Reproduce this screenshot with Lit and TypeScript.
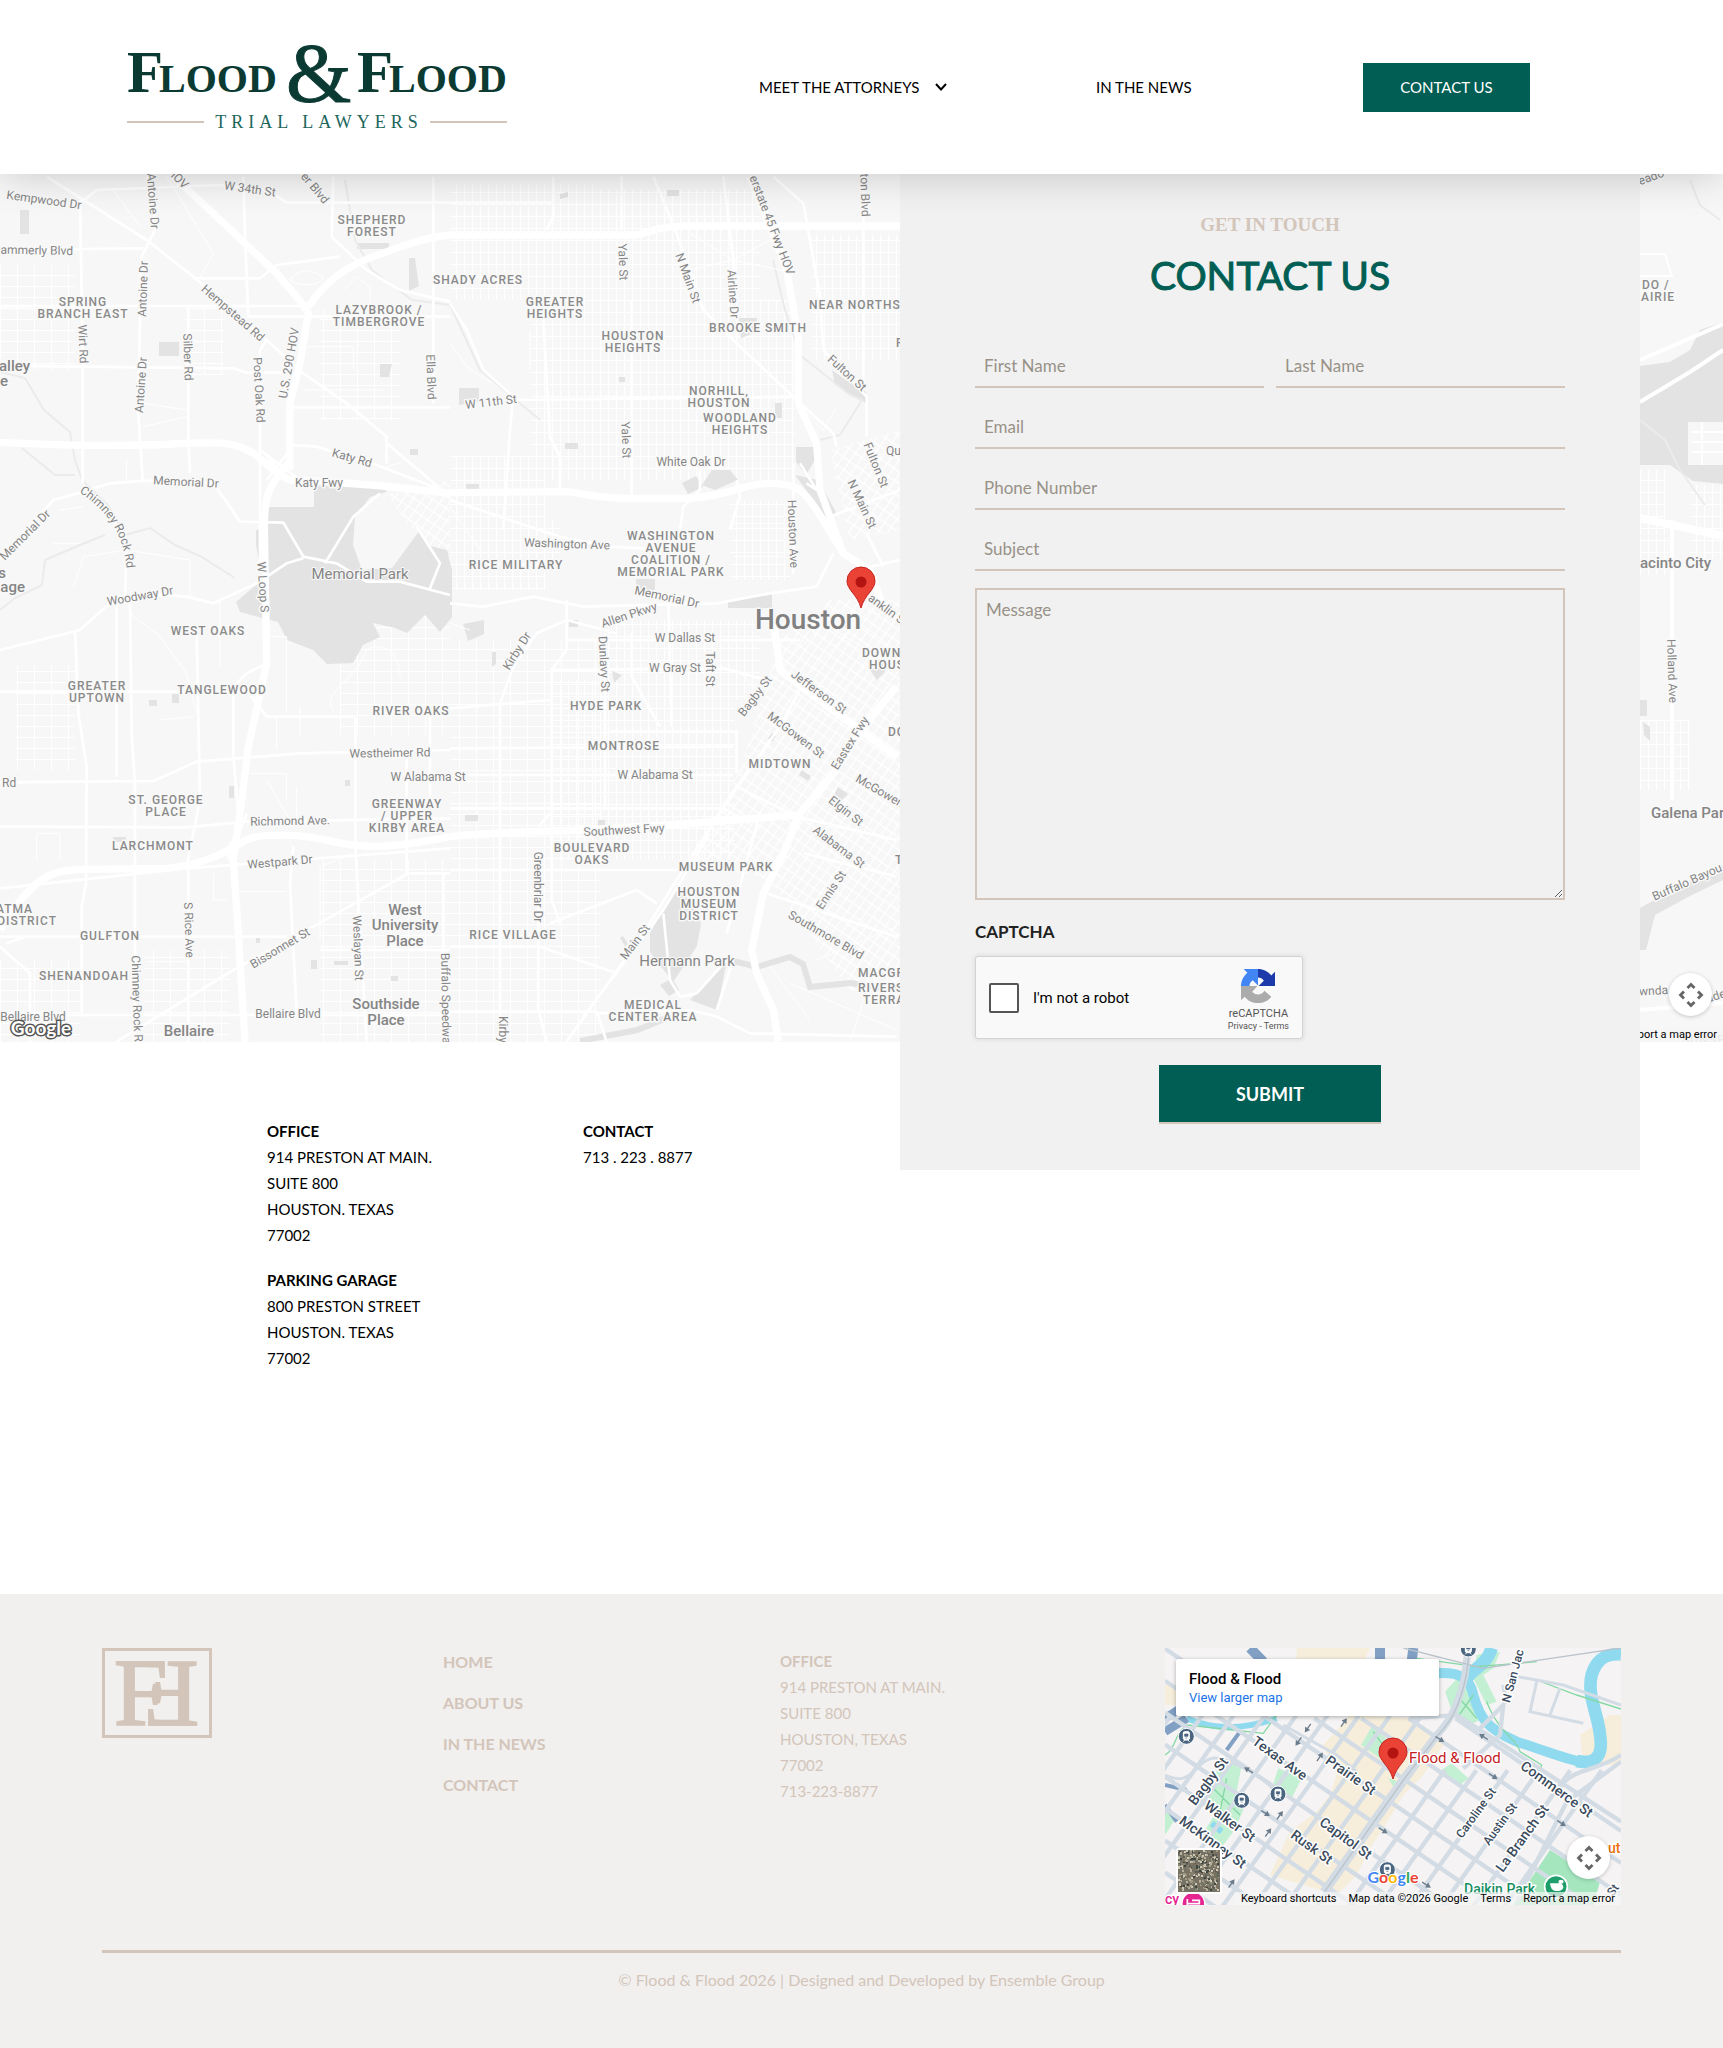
import { LitElement, html, svg, css, nothing } from "lit";
import { customElement } from "lit/decorators.js";

type Anchor = "start" | "middle" | "end";
type Label = [text: string, x: number, y: number, angle?: number, anchor?: Anchor];

const STREETS: Label[] = [
  ["Kempwood Dr", 44, 200, 8], ["Antoine Dr", 153, 201, 86], ["HOV", 178, 178, 45],
  ["W 34th St", 250, 189, 8], ["er Blvd", 315, 188, 50], ["Hammerly Blvd", 73, 251, 1, "end"],
  ["Antoine Dr", 143, 289, -88], ["Wirt Rd", 83, 344, 88], ["Silber Rd", 188, 357, 88],
  ["Antoine Dr", 141, 385, -86], ["Hempstead Rd", 233, 313, 41], ["U.S. 290 HOV", 289, 363, -80],
  ["Post Oak Rd", 259, 390, 87], ["Ella Blvd", 431, 377, 88], ["Katy Rd", 352, 458, 16],
  ["Katy Fwy", 319, 483], ["Memorial Dr", 186, 482, 3], ["Memorial Dr", 25, 535, -45],
  ["W Loop S", 263, 587, 86], ["Woodway Dr", 140, 596, -10], ["Yale St", 623, 262, 88],
  ["N Main St", 688, 278, 70], ["Airline Dr", 733, 294, 86], ["erstate 45 Fwy HOV", 772, 225, 69],
  ["ton Blvd", 865, 195, 88], ["W 11th St", 491, 402, -7], ["Yale St", 626, 440, 88],
  ["White Oak Dr", 691, 462], ["Fulton St", 847, 373, 42], ["Fulton St", 876, 465, 68],
  ["N Main St", 862, 504, 65], ["Qu", 886, 451, 0, "start"], ["Houston Ave", 793, 534, 88],
  ["Washington Ave", 567, 544, 2], ["Memorial Dr", 667, 597, 12], ["anklin St", 888, 610, 36],
  ["Westheimer Rd", 390, 753, -1], ["W Alabama St", 428, 777], ["Richmond Ave.", 290, 821, -1],
  ["Westpark Dr", 280, 862, -5], ["S Rice Ave", 189, 930, 88], ["Chimney Rock Rd", 137, 1002, 88],
  ["Bissonnet St", 280, 948, -31], ["Weslayan St", 358, 948, 88], ["Bellaire Blvd", 288, 1014],
  ["Bellaire Blvd", 33, 1017], ["Buffalo Speedway", 445, 953, 89, "start"], ["Rd", 2, 783, 0, "start"],
  ["Allen Pkwy", 629, 615, -18], ["Kirby Dr", 517, 651, -58], ["Dunlavy St", 604, 664, 87],
  ["W Dallas St", 685, 638], ["W Gray St", 675, 668], ["Taft St", 710, 669, 90],
  ["Bagby St", 755, 696, -53], ["Jefferson St", 819, 692, 36], ["McGowen St", 796, 735, 37],
  ["Eastex Fwy", 850, 743, -58], ["McGowen", 880, 791, 30], ["W Alabama St", 655, 775],
  ["Elgin St", 846, 811, 38], ["Alabama St", 839, 847, 37], ["Ennis St", 831, 890, -56],
  ["Southmore Blvd", 826, 935, 30], ["Southwest Fwy", 624, 830, -3], ["Greenbriar Dr", 538, 887, 90],
  ["Main St", 635, 942, -53], ["Kirby Dr", 503, 1016, 90, "start"], ["eado", 1651, 177, -20],
  ["Holland Ave", 1672, 671, 88], ["Buffalo Bayou", 1687, 882, -24], ["awnda", 1668, 990, -3, "end"],
  ["ade", 1716, 996, -18],
];

const AREAS: Label[] = [
  ["SHEPHERD", 372, 220], ["FOREST", 372, 232], ["SPRING", 83, 302], ["BRANCH EAST", 83, 314],
  ["LAZYBROOK /", 379, 310], ["TIMBERGROVE", 379, 322], ["SHADY ACRES", 478, 280],
  ["GREATER", 555, 302], ["HEIGHTS", 555, 314], ["HOUSTON", 633, 336], ["HEIGHTS", 633, 348],
  ["BROOKE SMITH", 758, 328], ["NEAR NORTHS", 809, 305, 0, "start"], ["P", 896, 343, 0, "start"],
  ["NORHILL,", 719, 391], ["HOUSTON", 719, 403], ["WOODLAND", 740, 418], ["HEIGHTS", 740, 430],
  ["WASHINGTON", 671, 536], ["AVENUE", 671, 548], ["COALITION /", 671, 560], ["MEMORIAL PARK", 671, 572],
  ["RICE MILITARY", 516, 565], ["WEST OAKS", 208, 631], ["GREATER", 97, 686], ["UPTOWN", 97, 698],
  ["TANGLEWOOD", 222, 690], ["RIVER OAKS", 411, 711], ["ST. GEORGE", 166, 800], ["PLACE", 166, 812],
  ["GREENWAY", 407, 804], ["/ UPPER", 407, 816], ["KIRBY AREA", 407, 828], ["LARCHMONT", 153, 846],
  ["MAHATMA", 33, 909, 0, "end"], ["DISTRICT", 57, 921, 0, "end"], ["GULFTON", 110, 936],
  ["SHENANDOAH", 84, 976], ["HYDE PARK", 606, 706], ["DOWN", 862, 653, 0, "start"],
  ["HOUS", 869, 665, 0, "start"], ["DO", 888, 732, 0, "start"], ["MONTROSE", 624, 746],
  ["MIDTOWN", 780, 764], ["BOULEVARD", 592, 848], ["OAKS", 592, 860], ["MUSEUM PARK", 726, 867],
  ["HOUSTON", 709, 892], ["MUSEUM", 709, 904], ["DISTRICT", 709, 916], ["RICE VILLAGE", 513, 935],
  ["MEDICAL", 653, 1005], ["CENTER AREA", 653, 1017], ["MACGR", 858, 973, 0, "start"],
  ["RIVERS", 858, 988, 0, "start"], ["TERRA", 863, 1000, 0, "start"], ["T", 895, 860, 0, "start"],
  ["DO /", 1642, 285, 0, "start"], ["AIRIE", 1641, 297, 0, "start"],
];

const TOWNS: Label[] = [
  ["Valley", 30, 366, 0, "end"], ["e", 8, 381, 0, "end"], ["s", 6, 573, 0, "end"], ["Village", 25, 587, 0, "end"],
  ["West", 405, 910], ["University", 405, 925], ["Place", 405, 941],
  ["Southside", 386, 1004], ["Place", 386, 1020], ["Bellaire", 189, 1031],
  ["acinto City", 1640, 563, 0, "start"], ["Galena Park", 1651, 813, 0, "start"],
];

const PARKS: Label[] = [["Memorial Park", 360, 574], ["Hermann Park", 687, 961]];

/* Road sheets: each is drawn on a 3x grid that starts at the given origin. */
const SHEETS = [
  {
    x: 0, y: 170,
    wide: "M0 817C150 825 350 830 520 822S700 818 760 850C800 880 840 920 870 930C1000 935 1150 945 1350 970M520 20L640 130L830 310C880 370 910 400 925 430L900 580L870 700V900M925 410C980 330 1040 290 1120 260S1280 200 1350 195M865 880C800 950 795 990 793 1060L797 1320",
    mid: "M0 408H900M240 90L248 560V940M440 20L470 170L425 260L420 450L415 730L428 930M565 410V800L570 910M0 587L700 595L740 608H860M0 240L430 235M140 20L440 210L580 320L800 510L910 610L1040 700L1160 800V880M1160 820L1350 980M580 325H780L830 285L1020 260M730 20L735 200L745 440H1350M1000 20L995 200L1100 300L1200 360L1350 395M870 825L950 830L1130 885L1350 970M0 1170L160 990L250 965L330 940L430 932L640 940L690 1010L720 1055L850 1058L910 1160L1010 1180L1100 1235H1200L1350 1275M800 510L780 540V1180M860 712H1350M1300 20V700M245 965L340 1050L380 1120L375 1300M240 100L290 60L660 45L800 60L860 98H1350M320 1300L420 1270L560 1280L640 1300L770 1240L860 1180L910 1165M975 1180L1060 1040L1140 970M1250 1070L1320 1180L1290 1255M795 850L860 930M800 930L870 840M780 840L900 930",
    fine: "M380 870V930M1160 890L1200 880M180 1020L250 1010M160 1120H240M220 1250L250 1160L380 1140L570 1170V1280M430 700L560 720M430 770L560 740M870 330C900 290 950 300 970 325C950 350 900 350 870 330M1030 360L1070 320L1110 350V400M500 20L640 250L600 325M340 60L420 170M910 660H1150M920 530H1060L1060 600",
  },
  {
    x: 450, y: 170,
    wide: "M0 195H560C620 180 620 170 720 168H1350M0 968L350 965C430 975 450 985 550 985H720C850 975 880 940 960 940S1060 960 1100 1020L1180 1150L1260 1200L1300 1310M900 20L960 170L1010 300L1045 500V700L1100 820L1110 960L1180 1150",
    mid: "M310 20V140L290 180M515 20V180M545 390V980M280 450L300 800L330 860V960M0 400L50 480L100 600L190 680L180 780L160 1080M200 690L1040 680M610 20L680 190L760 420L860 520L1040 690L1150 790L1160 830M820 20L850 270L860 400M970 20L1060 100L1110 380L1120 540L1250 680V800M1240 20V660M0 98H310M1030 880V1210M690 1080L700 1010L750 960V900M0 1300L100 1310L250 1280L400 1310L800 1300L960 1270L1100 1250L1150 1150M1260 1190L1350 1170M860 930L870 980L840 1080M0 990L330 1100L480 1130L660 1140M1050 880L1100 960L1070 940M1140 1040L1350 960M1250 1090L1300 1190",
    fine: "M720 190L850 270L960 210M720 300L850 270L1040 310M240 480V600M0 520L60 600L130 640M1040 700L1120 780L1160 710M0 1010L90 1140M850 1060H1000M850 1160H1000",
  },
  {
    x: 0, y: 600,
    wide: "M797 0L800 190L745 440L720 640L700 780L715 1000L735 1325M0 990C100 830 150 810 250 808L500 805C640 790 700 740 740 720S900 700 1000 725S1200 740 1350 710",
    mid: "M0 150L240 90L340 0M225 90L235 340L260 500L258 850L245 920V1250M350 0V530M390 0L395 400L405 550V1325M0 275H800M800 190L740 220L700 260V470L715 640M0 547L460 543L590 485L900 460L1350 450M0 680L560 682L740 665L1350 655M0 865L560 805L1350 745M740 270L800 350H1060M1066 350V740L1075 900L1100 1325M565 800V1325M0 1010H860M350 1325L700 1110L940 980L1225 820H1350M0 1245H1350M1220 450V820M1290 350V600M880 740L870 850L890 1240M590 100L600 600L560 800M960 1050H1350M0 1040L90 1120V1325M1330 820V1325M20 1030L80 1010M690 780C660 740 730 700 740 640",
    fine: "M660 0V200M390 40L480 110L560 220L590 340M800 110H860V340M830 350V450M900 320V410M480 360L580 350M1000 330C960 280 1070 240 1100 150C1150 120 1200 160 1200 230M110 780V700H180V780M750 520H860V600M800 540L880 680M890 660V560M640 820V900H680M960 1020V800L1060 760M440 1085H560M720 875H860",
  },
  {
    x: 450, y: 600,
    wide: "M0 710C60 700 150 700 400 690L700 672L1040 645M1340 260L1240 380L1150 520L1050 640L1000 760L940 880L905 1050L920 1120L970 1230L985 1325M970 60L990 210L1160 340L1340 470",
    mid: "M150 1325V310L190 200L260 100L350 60L500 100M350 0V150L305 210V900L330 970M465 100V620M0 325L300 300M300 210L820 205L950 240M350 120H1050M0 445L850 440M0 625H820L900 670M545 100V230L630 380M655 0L665 380M480 395H860V520M50 525H850M0 810H680M350 1325L580 1000L680 840L860 560L990 380L1060 250M0 1040H270L500 1120M0 1235H440L470 1325M440 1240L720 1230L800 1250L900 1300L1340 1310M860 560L1040 650L1340 720M265 750V1230L290 1325M640 940L660 1140L690 1190L740 1180L830 1080M400 1250L640 930L780 700M300 970L560 870L620 910M850 1080L800 1230M930 640L830 1000M1060 760L1340 830M950 880L1340 1010M300 640L265 680",
    fine: "M0 70L60 90M860 210L960 300M1000 190L1200 0M1080 220L1290 0M1340 150L1200 50M1150 300L1340 100M1340 200L1100 60M960 1100L1080 1260M1100 1080L1340 980M1020 1150L1340 1290M1240 1200L1200 1325",
  },
];

const drawLabels = (labels: Label[], cls: string) =>
  labels.map(([text, x, y, angle = 0, anchor = "middle"]) => svg`
    <text class=${cls} x=${x} y=${y} text-anchor=${anchor} dominant-baseline="central"
      transform=${angle ? `rotate(${angle} ${x} ${y})` : nothing}>${text}</text>`);

const pin = (x: number, y: number) => svg`
  <g transform="translate(${x} ${y})">
    <path d="M0 0C-2 -7 -5 -11 -9 -16C-12 -20 -14 -23 -14 -27A14 14 0 0 1 14 -27C14 -23 12 -20 9 -16C5 -11 2 -7 0 0Z" fill="#ea4335" stroke="#c5221f" stroke-width="1"/>
    <circle cx="0" cy="-26" r="5.5" fill="#b31412"/>
  </g>`;

const cameraIcon = html`
  <svg class="camera-icon" viewBox="0 0 26 26" aria-hidden="true">
    <path d="M9.500 6L13 2.500L16.500 6M9.500 20L13 23.500L16.500 20M6 9.500L2.500 13L6 16.500M20 9.500L23.500 13L20 16.500" fill="none" stroke="#666" stroke-width="2.800"/>
  </svg>`;

const cameraStyles = css`
  .camera {
    position: absolute;
    width: 43px;
    height: 43px;
    padding: 0;
    border: 0;
    border-radius: 50%;
    background: #fff;
    box-shadow: 0 1px 4px rgba(0, 0, 0, 0.2);
    display: grid;
    place-items: center;
  }
  .camera-icon { width: 26px; height: 26px; }
`;

@customElement("area-map")
export class AreaMap extends LitElement {
  static styles = [cameraStyles, css`
    :host { display: block; position: relative; overflow: hidden; background: #f7f7f7; height: 868px; }
    .canvas { display: block; width: 100%; height: 100%; }
    text { font-family: Roboto, sans-serif; fill: #858585; stroke: #f9f9f9; stroke-width: 3px; stroke-linejoin: round; paint-order: stroke; }
    .street { font-size: 12px; }
    .area { font-size: 12px; font-weight: 500; letter-spacing: 1px; fill: #8a8a8a; }
    .faint { font-size: 12px; font-weight: 500; letter-spacing: 1px; fill: #d0d0d0; }
    .town { font-size: 15px; font-weight: 500; }
    .park { font-size: 15px; stroke-width: 2px; }
    .city { font-size: 28px; font-weight: 500; fill: #808080; }
    .brand { font-family: Lato, sans-serif; font-size: 19px; font-weight: 700; fill: #fff; stroke: #555; }
    .camera { right: 11px; bottom: 26px; }
    .report { position: absolute; right: 0; bottom: 0; padding: 0 6px; font: 11px/14px Roboto, sans-serif; color: #000; text-decoration: none; background: rgba(245, 245, 245, 0.7); }
  `];

  render() {
    return html`
      <svg class="canvas" viewBox="0 174 1723 868" preserveAspectRatio="xMinYMin slice" role="img" aria-label="Map of Houston">
        <defs>
          <pattern id="blocks" width="17" height="11" patternUnits="userSpaceOnUse">
            <path d="M0 .5H17M.5 0V11" stroke="#fff" stroke-width="1" fill="none"/>
          </pattern>
          <pattern id="dense" width="8" height="12" patternUnits="userSpaceOnUse">
            <path d="M0 .5H8M.5 0V12" stroke="#fff" stroke-width="1.200" fill="none"/>
          </pattern>
          <pattern id="slanted" width="8" height="10" patternUnits="userSpaceOnUse" patternTransform="rotate(35)">
            <path d="M0 .5H8M.5 0V10" stroke="#fff" stroke-width="1.400" fill="none"/>
          </pattern>
          <path id="rock" d="M79 492Q112 514 121 542T124 580"/>
        </defs>
        <rect x="0" y="174" width="1723" height="868" fill="#f7f7f7"/>
        <path fill="url(#blocks)" d="M0 265H75V370H0ZM185 305H225V375H185ZM320 310H400V420H320ZM450 640H600V1042H450ZM320 860H450V1042H320ZM340 600H450V735H340ZM145 950H230V1042H145ZM15 665H75V770H15ZM0 960H80V1042H0Z"/>
        <path fill="url(#dense)" d="M450 185H600V300H450ZM530 300H795V480H530ZM600 190H760V300H600ZM812 235H900V360H812ZM450 455H545V590H450ZM550 680H735V860H550ZM600 620H760V700H600ZM450 520H560V560H450ZM730 500H790V580H730Z"/>
        <path fill="url(#slanted)" d="M780 640L830 600H900V1000L850 990L770 880L690 860L740 770ZM830 450L900 430V530L850 540ZM385 495L450 480V560L430 550Z"/>
        <path fill="url(#dense)" d="M1640 470H1665V535H1640ZM1690 485H1723V560H1690ZM1640 720H1690V790H1640ZM1640 537H1670V575H1640Z"/>

        <g fill="#e3e3e3">
          <path d="M268 507H314V484H386V492L370 497L355 517L353 545L362 570L392 568L420 530L430 546L447 550L452 570V617L440 632L425 615L407 633L395 628L373 623L380 637L363 645L353 663L327 664L313 650L287 640L278 622L240 612L236 602L262 580L256 545V530H268Z"/>
          <path d="M20 210h9v24h-9ZM159 342h20v14h-20ZM357 243h32v6h-32ZM409 258h6l4 28l-10 5ZM380 364h12l-3 13h-9ZM410 449h8v6h-8ZM459 388h20v14l-20 3ZM667 190h12v6h-12ZM739 318h18v14l-16 6ZM775 403h7v15h-7ZM565 443h13v6h-13ZM466 484h13v5h-13ZM619 377h6v5h-6ZM560 194l8 -2v5l-8 2Z"/>
          <path d="M832 370L846 380L866 392V403L835 385ZM796 447H815V460L806 475L796 462ZM795 475L818 480L836 512L828 520ZM682 483L696 476L703 487L688 494ZM712 470H730L738 480L715 490L702 485ZM728 600L772 594V608H728ZM636 579H655V590H636Z"/>
          <path d="M463 624L484 620V634L468 641ZM492 652h4v12l-4 3ZM569 620h9v7h-9ZM612 671l10 4l-8 8ZM149 700h8v6h-8ZM172 694h7v9h-7ZM229 786h5v12h-5ZM113 837h13v5h-13ZM345 780h5v6h-5ZM256 937h4v6h-4ZM311 960h6v9h-6ZM334 961h14v4h-14ZM391 976h7v5h-7ZM465 815h13v6h-13ZM598 820h7v7h-7ZM768 738l4 -5l4 3l-4 6ZM802 770l9 6l-3 5l-9 -6ZM838 787l10 7l-6 6l-8 -5ZM870 670l15 -8v10l-8 8Z"/>
          <path d="M650 933L676 890L690 900L701 924L697 946L673 982L650 952ZM727 960L717 1010L690 1000ZM623 936l5 8l-3 2l-5 -8ZM660 985l12 -7l7 12l-10 6Z"/>
          <path d="M1640 366L1670 362L1690 350L1700 330L1723 322V484L1693 481L1670 465H1640Z"/>
          <path d="M1640 700h7v16h-7ZM1643 722l7 5v14l-6 -6ZM1640 908L1700 875L1723 866V880L1690 896L1655 915L1646 950L1640 950Z"/>
        </g>
        <path d="M1688 422H1723V465H1688Z" fill="#f7f7f7"/>
        <g fill="none" stroke="#ebebeb" stroke-width="2">
          <path d="M0 372L25 378L44 410L70 432L75 460L82 480L108 505L125 535L150 528L175 545L200 556L235 578M22 448L55 475L75 475M0 610L15 598L42 585L45 560L80 545L105 535"/>
          <path d="M345 180L355 240L372 270L412 300L450 305L480 370L510 395L540 420M773 260L785 310L800 355L850 395L862 400L840 435L820 440M1690 180L1700 205L1720 220M1640 420L1665 440L1680 470L1705 505"/>
          <path stroke="#e3e3e3" stroke-width="6" d="M733 961L757 967L790 957L803 964L810 987L850 983L897 990M580 1041L637 1030L667 1018"/>
        </g>

        ${SHEETS.map((s) => svg`
          <g transform="translate(${s.x} ${s.y}) scale(.33333)" fill="none" stroke="#fff" stroke-linejoin="round">
            <path d=${s.fine} stroke-width="3"/>
            <path d=${s.mid} stroke-width="8"/>
            <path d=${s.wide} stroke-width="22"/>
          </g>`)}
        <g fill="none" stroke="#fff">
          <path stroke-width="4" d="M1640 360L1723 324M1640 402L1690 372L1723 350M1672 520V800M1640 1010L1723 1003"/>
          <path stroke-width="8" d="M1640 518L1723 536"/>
          <path stroke-width="2" d="M1640 254H1665L1672 276H1640M1692 432H1723M1692 442H1723M1692 452H1723M1702 422V465"/>
        </g>

        ${drawLabels(STREETS, "street")}
        <text class="street"><textPath href="#rock">Chimney Rock Rd</textPath></text>
        ${drawLabels(AREAS, "area")}
        ${drawLabels([["SUNSET", 1682, 1040, 0, "start"]], "faint")}
        ${drawLabels(TOWNS, "town")}
        ${drawLabels(PARKS, "park")}
        ${drawLabels([["Houston", 808, 619]], "city")}
        ${drawLabels([["Google", 41, 1027]], "brand")}
        ${pin(861, 608)}
      </svg>
      <button class="camera" type="button" aria-label="Map camera controls">${cameraIcon}</button>
      <a class="report" href="#">Report a map error</a>
    `;
  }
}

const TILE = ["#8a8572", "#5f5f55", "#b9b2a0", "#3f463f", "#a09a86", "#6d7262", "#cfc9b8", "#7b705c"];

@customElement("office-map")
export class OfficeMap extends LitElement {
  static styles = [cameraStyles, css`
    :host { display: block; position: relative; overflow: hidden; height: 257px; background: #f5f3f4; font-family: Roboto, sans-serif; }
    .canvas { display: block; width: 100%; height: 100%; }
    text { fill: #3b4b5d; stroke: #fff; stroke-width: 3px; stroke-linejoin: round; paint-order: stroke; font-size: 14px; font-weight: 500; }
    .minor { font-size: 12px; }
    .place { fill: #c5221f; font-size: 15px; font-weight: 400; }
    .venue { fill: #188f63; font-size: 14px; }
    .shop { fill: #e8710a; font-size: 14px; }
    .stay { fill: #e52592; font-size: 14px; }
    .brand { font-family: Lato, sans-serif; font-size: 16px; font-weight: 700; stroke-width: 2px; }
    .info { position: absolute; left: 11px; top: 11px; width: 263px; box-sizing: border-box; padding: 11px 13px 9px; border-radius: 2px; background: #fff; box-shadow: 0 1px 4px rgba(0, 0, 0, 0.3); }
    .name { margin: 0; font-size: 15px; line-height: 18px; font-weight: 500; color: #000; }
    .larger { display: block; font-size: 13px; line-height: 19px; color: #1a73e8; text-decoration: none; }
    .camera { right: 11px; bottom: 26px; }
    .legal { position: absolute; right: 0; bottom: 0; display: flex; gap: 12px; padding: 0 6px; background: rgba(245, 245, 245, 0.7); font-size: 11px; line-height: 13px; }
    .legal a, .legal button, .legal span { padding: 0; border: 0; background: none; color: #000; font: inherit; text-decoration: none; white-space: nowrap; }
  `];

  private tile() {
    let seed = 7;
    const next = () => (seed = (seed * 1103515245 + 12345) % 2147483648) / 2147483648;
    const cells = [];
    for (let i = 0; i < 420; i++) {
      cells.push(svg`<rect x=${13 + Math.floor(next() * 40)} y=${202 + Math.floor(next() * 40)} width="2" height="2" fill=${TILE[Math.floor(next() * 8)]}/>`);
    }
    return cells;
  }

  private station(x: number, y: number) {
    return svg`
      <g transform="translate(${x} ${y})">
        <circle r="24" fill="#4a6580" stroke="#fff" stroke-width="3"/>
        <path d="M-9 -10Q-9 -14 -5 -14H5Q9 -14 9 -10V8L5 11H-5L-9 8ZM-5 11L-9 16M5 11L9 16" fill="#fff" stroke="#fff" stroke-width="3"/>
        <path d="M-5 -7H5V0H-5ZM-3 5H3" fill="#4a6580" stroke="#4a6580" stroke-width="2"/>
      </g>`;
  }

  private arrow(x: number, y: number, angle: number) {
    return svg`<path transform="translate(${x} ${y}) rotate(${angle})" d="M-16 -2H0V-9L15 0L0 9V2H-16Z" fill="#6b7c8c"/>`;
  }

  render() {
    const along = Array.from({ length: 12 }, (_, k) => 683 - 96 * k);
    const across = Array.from({ length: 16 }, (_, k) => 235 + 94 * k);
    return html`
      <svg class="canvas" viewBox="0 0 456 257" preserveAspectRatio="xMidYMid slice" role="img" aria-label="Map around the office">
        <g transform="scale(.33333) translate(-45 -39)">
          <rect x="0" y="0" width="1460" height="860" fill="#f5f3f4"/>
          <path fill="#f6eedb" d="M600 240L780 250L880 330L820 420L760 480L700 580L660 640L620 720L560 780L360 720L420 590L500 530L540 480L560 420L520 330ZM440 39H660L640 80H440ZM45 150H90V210H45ZM1290 300L1380 240H1413V390H1300Z"/>
          <g fill="#c3f0d3">
            <path d="M665 275L720 320L690 370L633 330ZM210 385L275 390L260 470L190 430ZM385 400L455 430L425 490L370 445ZM200 430L290 500L265 560L170 500ZM190 545L250 590L220 630L150 610ZM905 385L955 430L930 450L875 405ZM45 520L80 545L45 600ZM715 430L740 438L730 455ZM885 170L940 110L1000 250L960 270L910 240ZM980 60L1050 50L1030 100L1000 120L1040 200L1010 210L970 130Z"/>
            <path fill="#a5e6bf" d="M1200 645L1350 740L1330 810H1090Z"/>
          </g>
          <g fill="none" stroke="#8fdaee">
            <path stroke-width="30" d="M860 115C930 110 960 130 970 180C990 250 1010 280 1100 320C1180 345 1240 370 1290 380"/>
            <path stroke-width="38" d="M1280 378C1340 390 1360 360 1350 300C1345 240 1310 180 1325 120C1340 70 1370 55 1413 58M950 130C970 100 1010 90 1025 39"/>
            <path stroke-width="18" d="M110 250C180 280 260 290 380 250M185 565L215 590"/>
          </g>
          <g fill="none" stroke="#81a0c4">
            <path stroke-width="26" d="M45 290L110 250M45 250L170 170L210 130"/>
            <path stroke-width="30" d="M300 39L340 80M690 39V80M790 39L785 80"/>
            <path stroke-width="12" d="M45 450L110 465M45 510L80 560M230 345L270 290"/>
          </g>
          <path fill="none" stroke="#85d8a4" stroke-width="4" d="M45 360C80 340 70 300 110 270L340 295L380 240M800 70L980 95L1160 80M1010 200C1050 300 1100 310 1110 350L1175 390L1160 440M1160 135L1280 180L1413 222M670 290L720 360M690 290L650 340M180 450L270 540M230 430L210 530M920 180L980 250M970 180L920 250"/>
          <g stroke="#d3dce4" stroke-width="13" fill="none">
            ${along.map((c) => svg`<path d="M${c < -80 ? Math.round((250 - c) / 0.68) : 45} ${c < -80 ? 250 : Math.round(c + 30)}L1413 ${Math.round(c + 961)}"/>`)}
            ${across.map((d) => svg`<path d="M${Math.round(d - 600)} 840L${Math.round(d - (d > 1150 ? 290 : 172))} ${d > 1150 ? 406 : 241}"/>`)}
            <path d="M780 250L920 240L1060 330L1413 560M985 285L1060 210L1050 300L940 400M1060 150L1070 205M1230 460C1260 400 1340 410 1413 360M1100 800L1250 500L1413 380"/>
            <path stroke-width="9" d="M45 420C150 470 130 330 240 380S330 430 380 470M400 270L560 360L620 410M1075 120L1240 150L1413 210M1160 140L1140 230L1300 265M1230 160L1200 240"/>
            <path stroke-width="22" d="M520 770L760 430L860 300C910 250 930 190 945 120L955 39"/>
          </g>
          <path fill="none" stroke="#b9c3cb" stroke-width="4" d="M524 770L764 430L864 300C914 250 934 190 949 120L959 39M760 39L1000 100L1413 39"/>
          ${this.arrow(473, 280, 125)}${this.arrow(445, 320, 125)}${this.arrow(582, 262, -55)}${this.arrow(510, 365, -55)}
          ${this.arrow(870, 313, 32)}${this.arrow(1000, 305, 212)}${this.arrow(1030, 424, 32)}${this.arrow(1235, 565, 32)}
          ${this.arrow(700, 587, 32)}${this.arrow(295, 405, 212)}${this.arrow(347, 535, 32)}${this.arrow(390, 540, -55)}
          ${this.arrow(355, 592, -55)}${this.arrow(830, 750, 32)}${this.arrow(245, 745, -55)}
          ${this.station(109, 304)}${this.station(384, 477)}${this.station(275, 496)}${this.station(955, 42)}${this.station(712, 704)}
          <circle cx="1218" cy="755" r="34" fill="#1e9e6a" stroke="#fff" stroke-width="5"/>
          <path d="M1200 745H1225Q1240 745 1240 758Q1235 770 1215 768Q1202 765 1200 745ZM1225 740a8 6 0 1 0 16 0a8 6 0 1 0 -16 0" fill="#fff"/>
          <circle cx="130" cy="805" r="34" fill="#e52592" stroke="#fff" stroke-width="4"/>
          <path d="M112 792V812M112 806H148V796H126" stroke="#fff" stroke-width="5" fill="none"/>
        </g>
        ${drawLabels([
          ["Texas Ave", 115, 110, 36], ["Prairie St", 186, 127, 35], ["Bagby St", 43, 133, -53],
          ["Walker St", 65, 173, 36], ["McKinney St", 48, 194, 36], ["Rusk St", 147, 199, 36],
          ["Capitol St", 181, 190, 36], ["Commerce St", 392, 141, 36], ["La Branch St", 357, 190, -54],
        ], "major")}
        ${drawLabels([
          ["Caroline St", 311, 165, -54], ["Austin St", 335, 176, -54], ["N San Jac", 348, 28, -75], ["St", 448, 242, -55],
        ], "minor")}
        ${drawLabels([["Flood & Flood", 244, 110, 0, "start"]], "place")}
        ${drawLabels([["Daikin Park", 299, 241, 0, "start"]], "venue")}
        ${drawLabels([["ut", 443, 200, 0, "start"]], "shop")}
        ${drawLabels([["cy", 0, 251, 0, "start"]], "stay")}
        <text class="brand" x="228" y="235" text-anchor="middle"><tspan fill="#4285f4">G</tspan><tspan fill="#ea4335">o</tspan><tspan fill="#fbbc04">o</tspan><tspan fill="#4285f4">g</tspan><tspan fill="#34a853">l</tspan><tspan fill="#ea4335">e</tspan></text>
        ${pin(228, 131)}
        <rect x="11" y="200" width="46" height="46" rx="3" fill="#fff"/>
        <rect x="13" y="202" width="42" height="42" fill="#777263"/>
        ${this.tile()}
      </svg>
      <div class="info">
        <p class="name">Flood &amp; Flood</p>
        <a class="larger" href="#">View larger map</a>
      </div>
      <button class="camera" type="button" aria-label="Map camera controls">${cameraIcon}</button>
      <div class="legal">
        <button type="button">Keyboard shortcuts</button>
        <span>Map data ©2026 Google</span>
        <a href="#">Terms</a>
        <a href="#">Report a map error</a>
      </div>
    `;
  }
}

@customElement("contact-form")
export class ContactForm extends LitElement {
  static styles = css`
    :host { display: block; box-sizing: border-box; padding: 38px 75px 46px; background: #f1f1f1; font-family: Lato, sans-serif; }
    .eyebrow { margin: 0; text-align: center; font: 700 19px/26px "Liberation Serif", serif; color: #d3c5ba; }
    .title { margin: 13px 0 45px; text-align: center; font-size: 39px; line-height: 48px; font-weight: 400; color: #005e54; -webkit-text-stroke: 1px #005e54; }
    .form { display: grid; grid-template-columns: 1fr 1fr; column-gap: 12px; row-gap: 17px; margin: 0; }
    .field { box-sizing: border-box; width: 100%; height: 44px; padding: 0 9px; border: 0; border-bottom: 2px solid #d3c5ba; border-radius: 0; background: transparent; font: 17px/24px Lato, sans-serif; color: #222; outline: 0; }
    .wide { grid-column: 1 / -1; }
    .message { height: 312px; padding: 8px 9px; border: 2px solid #d3c5ba; resize: vertical; }
    .field::placeholder { color: #989188; opacity: 1; }
    .captcha-title { margin: 5px 0 0; font-size: 17px; line-height: 20px; font-weight: 700; color: #222; }
    .captcha { grid-column: 1 / -1; justify-self: start; box-sizing: border-box; width: 328px; height: 83px; margin-top: -3px; padding: 0 13px; display: flex; align-items: center; justify-content: space-between; border: 1px solid #d3d3d3; border-radius: 3px; background: #f9f9f9; box-shadow: 0 0 4px 1px rgba(0, 0, 0, 0.08); font-family: Roboto, sans-serif; }
    .robot { display: flex; align-items: center; gap: 14px; font-size: 15px; line-height: 20px; color: #000; }
    .tick { appearance: none; box-sizing: border-box; width: 30px; height: 30px; margin: 0; border: 2px solid #555; border-radius: 2px; background: #fff; }
    .badge { display: grid; justify-items: center; padding-top: 5px; color: #555; }
    .badge svg { width: 34px; height: 34px; margin-bottom: 4px; }
    .badge-name { font-size: 11px; line-height: 14px; }
    .badge-links { font-size: 9px; line-height: 11px; }
    .badge-links a { color: inherit; text-decoration: none; }
    .submit { grid-column: 1 / -1; justify-self: center; width: 222px; height: 59px; margin-top: 9px; padding: 0; border: 0; border-bottom: 2px solid #d3c5ba; background: #005e54; font: 700 18px/24px Lato, sans-serif; color: #fff; }
  `;

  render() {
    return html`
      <p class="eyebrow">GET IN TOUCH</p>
      <h1 class="title">CONTACT US</h1>
      <form class="form">
        <input class="field" type="text" placeholder="First Name" aria-label="First Name">
        <input class="field" type="text" placeholder="Last Name" aria-label="Last Name">
        <input class="field wide" type="email" placeholder="Email" aria-label="Email">
        <input class="field wide" type="tel" placeholder="Phone Number" aria-label="Phone Number">
        <input class="field wide" type="text" placeholder="Subject" aria-label="Subject">
        <textarea class="field wide message" placeholder="Message" aria-label="Message"></textarea>
        <p class="captcha-title wide">CAPTCHA</p>
        <div class="captcha">
          <label class="robot"><input class="tick" type="checkbox">I'm not a robot</label>
          <div class="badge">
            <svg viewBox="0 0 64 64" aria-hidden="true">
              <path fill="#1c3aa9" d="M64 32V5L57 12C51 5 42 0 32 0V16C37 16 40 18 43 22L33 32Z"/>
              <path fill="#4285f4" d="M32 0H5L12 7C5 13 0 22 0 32H16C16 27 18 24 22 21L32 31Z"/>
              <path fill="#ababab" d="M0 32V59L7 52C13 60 22 64 32 64C42 64 51 60 57 52L44 41C41 46 37 48 32 48C27 48 24 46 21 43L31 32Z"/>
            </svg>
            <span class="badge-name">reCAPTCHA</span>
            <span class="badge-links"><a href="#">Privacy</a> - <a href="#">Terms</a></span>
          </div>
        </div>
        <button class="submit" type="button">SUBMIT</button>
      </form>
    `;
  }
}

@customElement("app-root")
export class AppRoot extends LitElement {
  static styles = css`
    :host { display: block; background: #fff; color: #000; font-family: Lato, sans-serif; font-size: 15px; line-height: 26px; }
    a { color: inherit; text-decoration: none; }
    p { margin: 0; }
    .header { position: relative; z-index: 2; display: grid; grid-template-columns: 632fr 337fr 267fr 167px; align-items: center; box-sizing: border-box; min-height: 174px; padding: 0 193px 0 127px; background: #fff; box-shadow: 0 0 40px rgba(0, 0, 0, 0.2); }
    .logo { width: 380px; height: 90px; display: block; overflow: visible; }
    .logo text { font-family: "Liberation Serif", serif; fill: #0b3a33; }
    .logo .initial { font-size: 59px; font-weight: 700; }
    .logo .caps { font-size: 40px; font-weight: 700; }
    .logo .and { font-size: 84px; stroke: #0b3a33; stroke-width: 1px; }
    .logo .tag { font-size: 18px; letter-spacing: 5px; fill: #1d665b; }
    .nav { display: contents; font-size: 15px; }
    .menu { display: inline-flex; align-items: center; gap: 16px; justify-self: start; }
    .menu svg { width: 12px; height: 8px; }
    .cta { display: grid; place-items: center; height: 49px; background: #005e54; color: #fff; }
    .contact { display: grid; grid-template-columns: 900fr 740fr 83fr; grid-template-rows: 868px auto; }
    .contact area-map { grid-area: 1 / 1 / 2 / -1; }
    .contact contact-form { position: relative; grid-area: 1 / 2 / 3 / 3; align-self: start; }
    .details { grid-area: 2 / 1 / 3 / 2; display: grid; grid-template-columns: 316px 1fr; padding: 76px 0 223px 267px; }
    .block + .block { margin-top: 19px; }
    .heading { margin: 0; font-size: 15px; line-height: 26px; font-weight: 700; }
    .footer { padding: 54px 102px 55px; background: #f1f0ee; color: #d3c5ba; }
    .columns { display: grid; grid-template-columns: 341fr 337fr 385fr 456fr; padding-bottom: 45px; border-bottom: 3px solid #d3c5ba; }
    .mark { width: 110px; height: 90px; display: block; }
    .mark text { font: 96px "Liberation Serif", serif; fill: #d3c5ba; stroke: #d3c5ba; stroke-width: 2px; }
    .links { display: grid; align-content: start; gap: 15px; padding-top: 1px; font-size: 16px; font-weight: 700; }
    .copy { margin-top: 14px; text-align: center; font-size: 16px; }
  `;

  render() {
    return html`
      <header class="header">
        <a href="#" aria-label="Flood and Flood Trial Lawyers">
          <svg class="logo" viewBox="0 0 380 90">
            <text class="initial" x="0" y="50">F</text>
            <text class="caps" x="32" y="50">LOOD</text>
            <text class="and" x="159" y="60">&amp;</text>
            <text class="initial" x="230" y="50">F</text>
            <text class="caps" x="262" y="50">LOOD</text>
            <path d="M0 80H77M303 80H380" stroke="#d3c5ba" stroke-width="2"/>
            <text class="tag" x="192" y="86" text-anchor="middle">TRIAL LAWYERS</text>
          </svg>
        </a>
        <nav class="nav">
          <a class="menu" href="#">MEET THE ATTORNEYS
            <svg viewBox="0 0 12 8" aria-hidden="true"><path d="M1 1L6 6.500L11 1" fill="none" stroke="#000" stroke-width="2"/></svg>
          </a>
          <a href="#">IN THE NEWS</a>
          <a class="cta" href="#">CONTACT US</a>
        </nav>
      </header>
      <main class="contact">
        <area-map></area-map>
        <contact-form></contact-form>
        <section class="details">
          <div>
            <div class="block">
              <h2 class="heading">OFFICE</h2>
              <p>914 PRESTON AT MAIN.</p><p>SUITE 800</p><p>HOUSTON. TEXAS</p><p>77002</p>
            </div>
            <div class="block">
              <h2 class="heading">PARKING GARAGE</h2>
              <p>800 PRESTON STREET</p><p>HOUSTON. TEXAS</p><p>77002</p>
            </div>
          </div>
          <div>
            <h2 class="heading">CONTACT</h2>
            <p><a href="#">713 . 223 . 8877</a></p>
          </div>
        </section>
      </main>
      <footer class="footer">
        <div class="columns">
          <svg class="mark" viewBox="0 0 110 90" role="img" aria-label="Flood and Flood">
            <rect x="1.500" y="1.500" width="107" height="87" fill="none" stroke="#d3c5ba" stroke-width="3"/>
            <text x="12" y="77">F</text>
            <text x="12" y="77" transform="rotate(180 54.500 45.500)">F</text>
          </svg>
          <nav class="links">
            <a href="#">HOME</a><a href="#">ABOUT US</a><a href="#">IN THE NEWS</a><a href="#">CONTACT</a>
          </nav>
          <div>
            <h2 class="heading">OFFICE</h2>
            <p>914 PRESTON AT MAIN.</p><p>SUITE 800</p><p>HOUSTON, TEXAS</p><p>77002</p>
            <p><a href="#">713-223-8877</a></p>
          </div>
          <office-map></office-map>
        </div>
        <p class="copy">© Flood &amp; Flood 2026 | Designed and Developed by Ensemble Group</p>
      </footer>
    `;
  }
}
